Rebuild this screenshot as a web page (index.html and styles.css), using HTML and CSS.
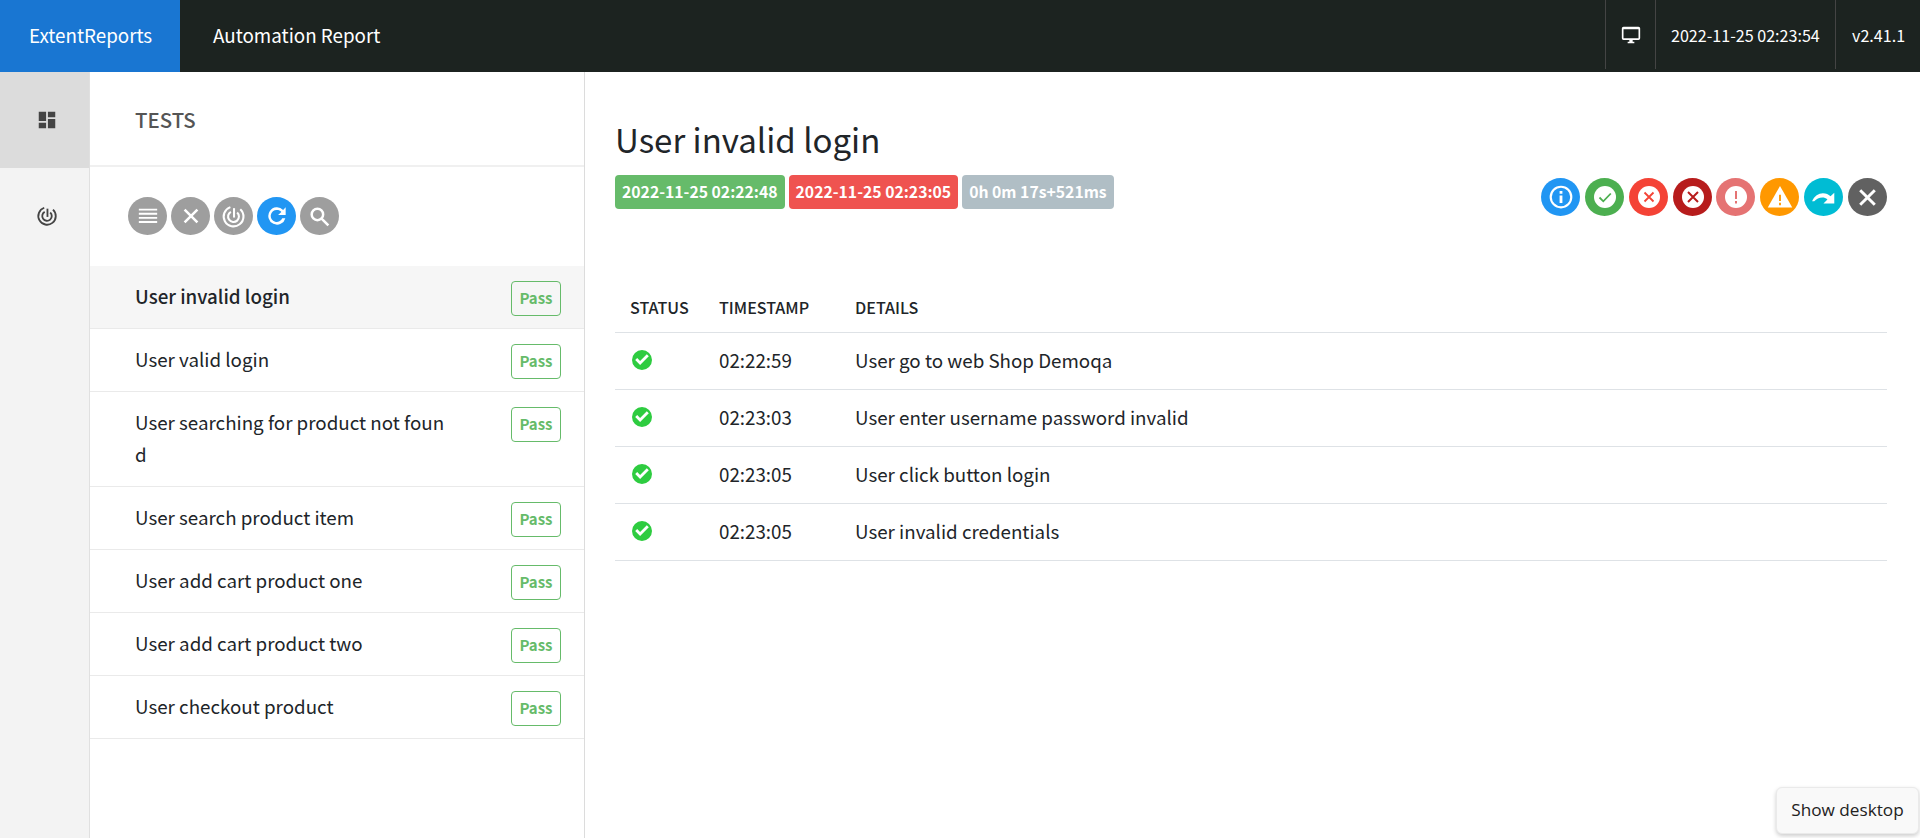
FILE: index.html
```html
<!DOCTYPE html>
<html lang="en">
<head>
    <meta charset="UTF-8">
    <meta name="viewport" content="width=device-width, initial-scale=1.0">
    <title>Automation Report</title>
    <link rel="stylesheet" href="styles.css">
</head>
<body>
    <svg class="defs" width="0" height="0">
        <symbol id="i-check" viewBox="0 0 24 24"><path d="M12 2a10 10 0 1 0 0 20 10 10 0 0 0 0-20zm-1.900 15L5.200 12.100l2-2 2.900 2.900 6.700-6.700 2 2z"/></symbol>
        <symbol id="i-close" viewBox="0 0 24 24"><path d="M5 5l14 14M19 5L5 19" fill="none" stroke="currentColor" stroke-width="2.800"/></symbol>
        <symbol id="i-radar" viewBox="0 0 24 24"><g fill="none" stroke="currentColor" stroke-width="2"><path d="M9 3A9.500 9.500 0 1 0 18.500 5"/><path d="M9.500 7.500A5.200 5.200 0 1 0 15.500 8.200"/><path d="M12.500 4v9"/></g></symbol>
    </svg>

    <div class="topbar">
        <div class="brand">ExtentReports</div>
        <div class="report-name">Automation Report</div>
        <div class="top-cell top-icon">
            <svg width="20" height="20" viewBox="0 0 24 24" fill="currentColor"><path d="M21 2H3a2 2 0 0 0-2 2v12a2 2 0 0 0 2 2h7v2H8v2h8v-2h-2v-2h7a2 2 0 0 0 2-2V4a2 2 0 0 0-2-2zm0 14H3V5h18z"/></svg>
        </div>
        <div class="top-cell top-date">2022-11-25 02:23:54</div>
        <div class="top-cell top-version">v2.41.1</div>
    </div>

    <div class="layout">
        <div class="sidenav">
            <div class="nav-item active">
                <svg width="22" height="22" viewBox="0 0 24 24" fill="#444"><path d="M13 3v6h8V3zm0 18h8V11h-8zM3 21h8v-6H3zm0-8h8V3H3z"/></svg>
            </div>
            <div class="nav-item">
                <svg width="22" height="22" color="#444"><use href="#i-radar"/></svg>
            </div>
        </div>

        <div class="test-panel">
            <div class="panel-head">TESTS</div>
            <div class="filters">
                <span class="round grey">
                    <svg width="22" height="22" viewBox="0 0 24 24" fill="none" stroke="currentColor" stroke-width="2"><path d="M2 5h20M2 9.500h20M2 14h20M2 18.500h20"/></svg>
                </span>
                <span class="round grey"><svg width="22" height="22"><use href="#i-close"/></svg></span>
                <span class="round grey"><svg width="25" height="25"><use href="#i-radar"/></svg></span>
                <span class="round blue">
                    <svg width="26" height="26" viewBox="0 0 24 24" fill="currentColor"><path d="M17.650 6.350A8 8 0 1 0 19.730 14h-2.880A5.500 5.500 0 1 1 12 6.500c1.600 0 3 .6 4 1.700L13 11h7V4z"/></svg>
                </span>
                <span class="round grey">
                    <svg width="25" height="25" viewBox="0 0 24 24" fill="none" stroke="currentColor" stroke-width="2.400"><circle cx="10" cy="10" r="5.500"/><path d="M14 14l6.500 6.500"/></svg>
                </span>
            </div>

            <div class="test-item current"><span class="test-name">User invalid login</span><span class="pass">Pass</span></div>
            <div class="test-item"><span class="test-name">User valid login</span><span class="pass">Pass</span></div>
            <div class="test-item"><span class="test-name">User searching for product not found</span><span class="pass">Pass</span></div>
            <div class="test-item"><span class="test-name">User search product item</span><span class="pass">Pass</span></div>
            <div class="test-item"><span class="test-name">User add cart product one</span><span class="pass">Pass</span></div>
            <div class="test-item"><span class="test-name">User add cart product two</span><span class="pass">Pass</span></div>
            <div class="test-item"><span class="test-name">User checkout product</span><span class="pass">Pass</span></div>
        </div>

        <div class="detail">
            <div class="detail-head">
                <div>
                    <h1>User invalid login</h1>
                    <div class="badges">
                        <span class="badge green">2022-11-25 02:22:48</span>
                        <span class="badge red">2022-11-25 02:23:05</span>
                        <span class="badge slate">0h 0m 17s+521ms</span>
                    </div>
                </div>
                <div class="status-icons">
                    <span class="round c-info">
                        <svg width="26" height="26" viewBox="0 0 24 24"><circle cx="12" cy="12" r="9.500" fill="none" stroke="#fff" stroke-width="2"/><path d="M10.700 10.500h2.600v7h-2.600zM10.700 6.500h2.600V9h-2.600z" fill="#fff"/></svg>
                    </span>
                    <span class="round c-pass">
                        <svg width="24" height="24" viewBox="0 0 24 24"><circle cx="12" cy="12" r="11" fill="#fff"/><path d="M6.500 12.500l3.800 3.800 7.500-7.800" fill="none" stroke="#4caf50" stroke-width="1.800"/></svg>
                    </span>
                    <span class="round c-fail">
                        <svg width="24" height="24" viewBox="0 0 24 24"><circle cx="12" cy="12" r="11" fill="#fff"/><path d="M7.500 7.500l9 9M16.500 7.500l-9 9" fill="none" stroke="#f44336" stroke-width="1.800"/></svg>
                    </span>
                    <span class="round c-fatal">
                        <svg width="24" height="24" viewBox="0 0 24 24"><circle cx="12" cy="12" r="11" fill="#fff"/><path d="M7 7l10 10M17 7L7 17" fill="none" stroke="#b71c1c" stroke-width="2"/></svg>
                    </span>
                    <span class="round c-error">
                        <svg width="24" height="24" viewBox="0 0 24 24"><circle cx="12" cy="12" r="11" fill="#fff"/><path d="M11 6h2v8h-2zM11 16h2v2.500h-2z" fill="#e57373"/></svg>
                    </span>
                    <span class="round c-warn">
                        <svg width="28" height="28" viewBox="0 0 24 24"><path d="M12 2.500L1.500 21h21z" fill="#fff"/><path d="M11.200 10h1.600v5.500h-1.600zM11.200 17h1.600v2h-1.600z" fill="#ff9800"/></svg>
                    </span>
                    <span class="round c-skip">
                        <svg width="26" height="26" viewBox="0 0 24 24" fill="#fff"><path d="M1 16c2-5 6-7.500 10-7.500 3 0 5 1 7 2.700L21.500 8v10h-10l3.700-3.700c-1.500-1.200-3-1.800-4.700-1.800-3 0-5.500 1.500-7.500 3.500z"/></svg>
                    </span>
                    <span class="round c-close"><svg width="25" height="25"><use href="#i-close"/></svg></span>
                </div>
            </div>

            <table class="steps">
                <thead>
                    <tr><th class="col-status">STATUS</th><th class="col-time">TIMESTAMP</th><th>DETAILS</th></tr>
                </thead>
                <tbody>
                    <tr><td><svg class="ok" width="24" height="24"><use href="#i-check"/></svg></td><td>02:22:59</td><td>User go to web Shop Demoqa</td></tr>
                    <tr><td><svg class="ok" width="24" height="24"><use href="#i-check"/></svg></td><td>02:23:03</td><td>User enter username password invalid</td></tr>
                    <tr><td><svg class="ok" width="24" height="24"><use href="#i-check"/></svg></td><td>02:23:05</td><td>User click button login</td></tr>
                    <tr><td><svg class="ok" width="24" height="24"><use href="#i-check"/></svg></td><td>02:23:05</td><td>User invalid credentials</td></tr>
                </tbody>
            </table>
        </div>
    </div>

    <div class="tooltip">Show desktop</div>
</body>
</html>
```

FILE: styles.css
```css
*{
    box-sizing: border-box;
}
html,body{
    height: 100%;
}
body{
    margin: 0;
    background-color: #fff;
    color: #212529;
    font-family: "Noto Sans CJK SC", "Open Sans", sans-serif;
    font-size: 18.750px;
    overflow: hidden;
}
.defs{
    position: absolute;
}
.topbar{
    display: flex;
    height: 72px;
    background-color: #1c2320;
    color: #fff;
}
.brand{
    width: 180px;
    background-color: #1976d2;
    padding-left: 29px;
    line-height: 70px;
    font-size: 18.800px;
}
.report-name{
    flex: 1;
    padding-left: 33px;
    line-height: 70px;
    font-size: 18.800px;
}
.top-cell{
    height: 69px;
    border-left: 1px solid #444;
    line-height: 70px;
    font-size: 16.100px;
}
.top-icon{
    display: flex;
    align-items: center;
    justify-content: center;
    width: 50px;
}
.top-date{
    width: 180px;
    padding-left: 15px;
}
.top-version{
    width: 85px;
    padding-left: 16px;
}
.layout{
    display: flex;
    height: 766px;
}
.sidenav{
    width: 90px;
    background-color: #f3f3f3;
    border-right: 1px solid #e0e0e0;
}
.nav-item{
    display: flex;
    align-items: center;
    justify-content: center;
    height: 96px;
    padding-left: 5px;
}
.nav-item.active{
    background-color: #dcdcdc;
}
.test-panel{
    width: 495px;
    border-right: 1px solid #dcdcdc;
}
.panel-head{
    height: 95px;
    padding-left: 45px;
    border-bottom: 2px solid #f0f0f0;
    line-height: 95px;
    font-size: 20.400px;
    font-weight: 500;
    color: #555;
}
.filters{
    display: flex;
    gap: 4px;
    height: 99px;
    padding: 30px 0 0 38px;
}
.round{
    display: flex;
    align-items: center;
    justify-content: center;
    width: 39px;
    height: 38px;
    border-radius: 50%;
    color: #fff;
}
.grey{
    background-color: #9e9e9e;
}
.blue{
    background-color: #2196f3;
}
.test-item{
    display: flex;
    justify-content: space-between;
    align-items: flex-start;
    padding: 15px 23px 15px 45px;
    border-bottom: 1px solid #eaeaea;
    line-height: 32px;
}
.test-item.current{
    background-color: #f6f6f6;
    font-weight: 500;
}
.test-name{
    width: 316px;
    margin: -1px 0 1px;
    word-break: break-all;
}
.pass{
    width: 50px;
    height: 35px;
    margin-bottom: -4px;
    border: 1px solid #66bb6a;
    border-radius: 4px;
    color: #66bb6a;
    text-align: center;
    font-size: 15px;
    font-weight: 700;
    line-height: 32px;
}
.detail{
    flex: 1;
    padding: 0 33px 0 30px;
}
.detail-head{
    display: flex;
    justify-content: space-between;
    height: 210px;
}
h1{
    margin: 0;
    padding-top: 32px;
    font-size: 33px;
    font-weight: 400;
    line-height: 70px;
}
.badges{
    display: flex;
    gap: 4px;
    margin-top: 1px;
}
.badge{
    height: 34px;
    padding: 0 7px;
    border-radius: 4px;
    color: #fff;
    font-size: 15.750px;
    font-weight: 700;
    line-height: 33px;
}
.green{
    background-color: #66bb6a;
}
.red{
    background-color: #ef5350;
}
.slate{
    background-color: #b0bec5;
}
.status-icons{
    display: flex;
    gap: 5px;
    padding-top: 106px;
}
.c-info{
    background-color: #2196f3;
}
.c-pass{
    background-color: #4caf50;
}
.c-fail{
    background-color: #f44336;
}
.c-fatal{
    background-color: #b71c1c;
}
.c-error{
    background-color: #e57373;
    margin-left: -1px;
}
.c-warn{
    background-color: #ff9800;
}
.c-skip{
    background-color: #00bcd4;
}
.c-close{
    background-color: #616161;
}
.steps{
    width: 100%;
    border-collapse: collapse;
}
.steps th{
    height: 50px;
    padding: 0 15px;
    border-bottom: 1px solid #dee2e6;
    text-align: left;
    font-size: 16.100px;
    font-weight: 500;
}
.steps td{
    height: 57px;
    padding: 0 15px 2px;
    border-bottom: 1px solid #dee2e6;
}
.col-status{
    width: 89px;
}
.col-time{
    width: 136px;
}
.ok{
    display: block;
    color: #2ecc40;
    fill: #2ecc40;
}
.tooltip{
    position: absolute;
    right: 1px;
    bottom: 4px;
    width: 143px;
    height: 47px;
    background-color: #f9f9f9;
    border: 1px solid #eaeaea;
    border-radius: 6px;
    box-shadow: 0 2px 4px rgba(0,0,0,0.2);
    color: #222;
    font-family: "Open Sans", sans-serif;
    font-size: 17.200px;
    line-height: 44px;
    text-align: center;
}
```
